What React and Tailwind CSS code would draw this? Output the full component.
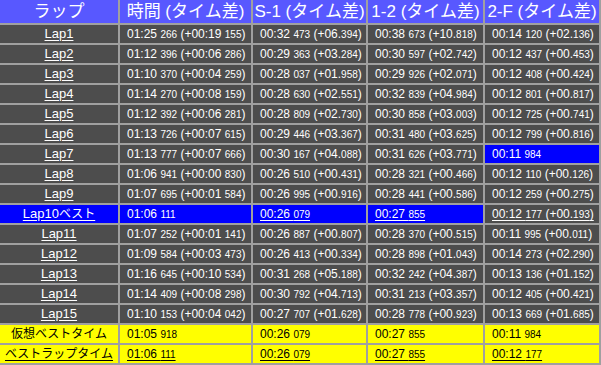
import React from 'react'

const laps = [
  ['Lap1', '01:25 266 (+00:19 155)', '00:32 473 (+06.394)', '00:38 673 (+10.818)', '00:14 120 (+02.136)'],
  ['Lap2', '01:12 396 (+00:06 286)', '00:29 363 (+03.284)', '00:30 597 (+02.742)', '00:12 437 (+00.453)'],
  ['Lap3', '01:10 370 (+00:04 259)', '00:28 037 (+01.958)', '00:29 926 (+02.071)', '00:12 408 (+00.424)'],
  ['Lap4', '01:14 270 (+00:08 159)', '00:28 630 (+02.551)', '00:32 839 (+04.984)', '00:12 801 (+00.817)'],
  ['Lap5', '01:12 392 (+00:06 281)', '00:28 809 (+02.730)', '00:30 858 (+03.003)', '00:12 725 (+00.741)'],
  ['Lap6', '01:13 726 (+00:07 615)', '00:29 446 (+03.367)', '00:31 480 (+03.625)', '00:12 799 (+00.816)'],
  ['Lap7', '01:13 777 (+00:07 666)', '00:30 167 (+04.088)', '00:31 626 (+03.771)', '00:11 984'],
  ['Lap8', '01:06 941 (+00:00 830)', '00:26 510 (+00.431)', '00:28 321 (+00.466)', '00:12 110 (+00.126)'],
  ['Lap9', '01:07 695 (+00:01 584)', '00:26 995 (+00.916)', '00:28 441 (+00.586)', '00:12 259 (+00.275)'],
  ['Lap10ベスト', '01:06 111', '00:26 079', '00:27 855', '00:12 177 (+00.193)'],
  ['Lap11', '01:07 252 (+00:01 141)', '00:26 887 (+00.807)', '00:28 370 (+00.515)', '00:11 995 (+00.011)'],
  ['Lap12', '01:09 584 (+00:03 473)', '00:26 413 (+00.334)', '00:28 898 (+01.043)', '00:14 273 (+02.290)'],
  ['Lap13', '01:16 645 (+00:10 534)', '00:31 268 (+05.188)', '00:32 242 (+04.387)', '00:13 136 (+01.152)'],
  ['Lap14', '01:14 409 (+00:08 298)', '00:30 792 (+04.713)', '00:31 213 (+03.357)', '00:12 405 (+00.421)'],
  ['Lap15', '01:10 153 (+00:04 042)', '00:27 707 (+01.628)', '00:28 778 (+00.923)', '00:13 669 (+01.685)'],
]

// which cells are blue / underlined (row index -> col index)
const blue = { 6: [4], 9: [0, 1, 2, 3] }
const under = { 9: [2, 3, 4] }

const font = { fontFamily: '"Liberation Sans", "Noto Sans CJK JP", sans-serif' }

// 3-digit groups after a space or dot are drawn smaller
const Time = ({ t }) => {
  const parts = t.split(/(?<=[ .])(\d{3})\b/)
  return (
    <>
      {parts.map((p, i) =>
        i % 2 ? (
          <span key={i} className="text-[10px]">{p}</span>
        ) : (
          <span key={i}>{p}</span>
        )
      )}
    </>
  )
}

// latin at 13px, japanese a bit smaller
const Label = ({ t }) => {
  const parts = t.split(/([^\x00-\x7f]+)/)
  return (
    <>
      {parts.map((p, i) =>
        i % 2 ? (
          <span key={i} className="text-[12px]">{p}</span>
        ) : (
          <span key={i}>{p}</span>
        )
      )}
    </>
  )
}

const Cell = ({ children, bg, center, underline }) => (
  <div
    className={`h-[18px] leading-[18px] whitespace-nowrap overflow-hidden ${bg} ${
      center ? 'text-center text-[13px]' : 'pl-[7px] text-[12px]'
    }`}
  >
    <span className={underline ? 'underline underline-offset-2' : ''}>{children}</span>
  </div>
)

export default function App() {
  return (
    <div
      style={font}
      className="w-[601px] h-[365px] bg-[#a0a0a0] grid grid-cols-[118px_131px_113px_115px_114px] gap-[2px] pr-[2px] pb-[2px] content-start"
    >
      {['ラップ', '時間 (タイム差)', 'S-1 (タイム差)', '1-2 (タイム差)', '2-F (タイム差)'].map((h) => (
        <div key={h} className="h-[23px] leading-[23px] text-[17px] text-white text-center bg-[#5858ff] whitespace-nowrap">
          {h}
        </div>
      ))}

      {laps.map((row, r) =>
        row.map((c, i) => {
          const isBlue = blue[r]?.includes(i)
          const bg = isBlue ? 'bg-[#0000ff] text-white' : 'bg-[#4d4d4d] text-white'
          if (i === 0) {
            return (
              <Cell key={r + '-' + i} bg={bg} center underline>
                <Label t={c} />
              </Cell>
            )
          }
          return (
            <Cell key={r + '-' + i} bg={bg} underline={under[r]?.includes(i)}>
              <Time t={c} />
            </Cell>
          )
        })
      )}

      <Cell bg="bg-[#ffff00] text-black" center>
        <Label t="仮想ベストタイム" />
      </Cell>
      {['01:05 918', '00:26 079', '00:27 855', '00:11 984'].map((t) => (
        <Cell key={'v' + t} bg="bg-[#ffff00] text-black">
          <Time t={t} />
        </Cell>
      ))}

      <Cell bg="bg-[#ffff00] text-black" center underline>
        <Label t="ベストラップタイム" />
      </Cell>
      {['01:06 111', '00:26 079', '00:27 855', '00:12 177'].map((t) => (
        <Cell key={'b' + t} bg="bg-[#ffff00] text-black" underline>
          <Time t={t} />
        </Cell>
      ))}
    </div>
  )
}
